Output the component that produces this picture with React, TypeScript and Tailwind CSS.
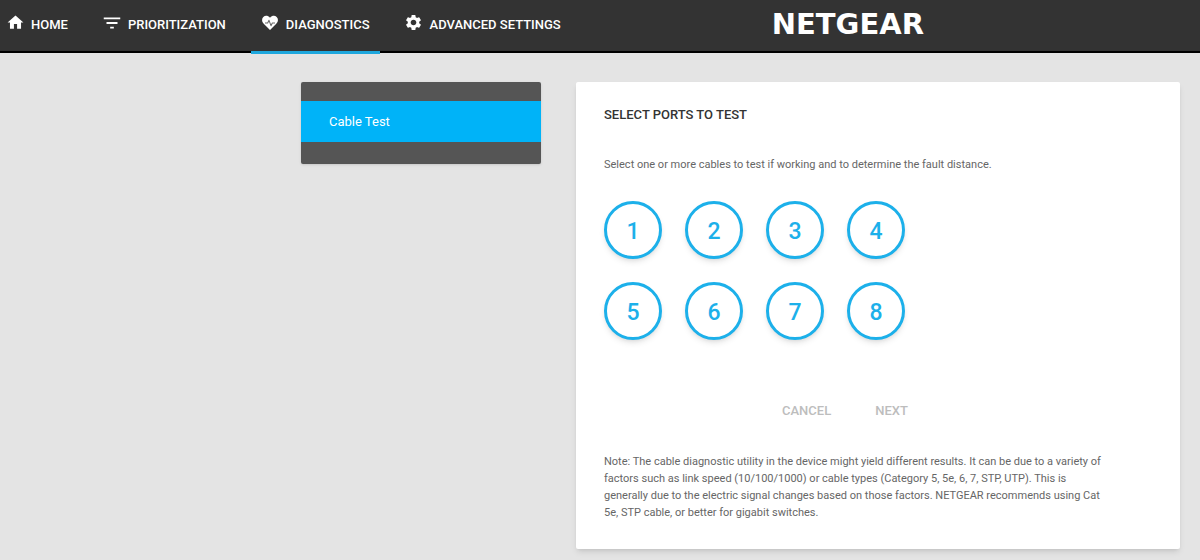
import { useState } from "react";
import type { ReactNode } from "react";
import clsx from "clsx";
import { MdFilterList, MdHome, MdSettings } from "react-icons/md";

type NavItem = {
  label: string;
  icon: ReactNode;
  active?: boolean;
};

function HeartPulseIcon({ className }: { className?: string }) {
  return (
    <svg viewBox="0 0 24 24" className={className} aria-hidden="true">
      <path
        fill="currentColor"
        d="M12 22.500 2.600 13.100C-.6 9.900-.6 5.500 2 3 4.800.4 9 .8 12 4.200 15 .8 19.200.4 22 3c2.600 2.500 2.600 6.900-.6 10.100z"
      />
      <path
        fill="none"
        stroke="#6a6a6a"
        strokeWidth="1.6"
        strokeLinejoin="round"
        d="M4.500 12h4l2-4 3 8 2-4h4"
      />
    </svg>
  );
}

const navItems: NavItem[] = [
  { label: "HOME", icon: <MdHome className="size-[19px] shrink-0" /> },
  { label: "PRIORITIZATION", icon: <MdFilterList className="size-[22px] shrink-0" /> },
  {
    label: "DIAGNOSTICS",
    icon: <HeartPulseIcon className="size-4 shrink-0" />,
    active: true,
  },
  { label: "ADVANCED SETTINGS", icon: <MdSettings className="size-[19px] shrink-0" /> },
];

const ports = [1, 2, 3, 4, 5, 6, 7, 8];

function Header() {
  return (
    <header className="flex h-[53px] items-stretch justify-between border-b-2 border-black bg-[#333333]">
      <nav className="-ml-1 flex gap-[15px]">
        {navItems.map((item) => (
          <a
            key={item.label}
            href="#"
            className={clsx(
              "-mb-[3px] flex items-center gap-[7px] border-b-3 px-2.5 pb-0.5 text-[13px] font-medium whitespace-nowrap text-white",
              item.active ? "border-[#1ea7dd]" : "border-transparent"
            )}
          >
            <span className="flex w-[18px] justify-center pb-1">{item.icon}</span>
            {item.label}
          </a>
        ))}
      </nav>
      <a
        href="#"
        className="mr-[23%] flex items-center pb-0.5 font-['DejaVu_Sans',sans-serif] text-[29px] font-bold text-white"
      >
        NETGEAR
      </a>
    </header>
  );
}

function Sidebar() {
  return (
    <aside className="w-60 shrink-0 rounded-xs bg-[#555555] pt-[19px] pb-[22px] shadow-sm">
      <a href="#" className="block bg-[#00b3f8] px-7 py-2.5 text-[13px] leading-[21px] text-white">
        Cable Test
      </a>
    </aside>
  );
}

function PortSelection() {
  const [selected, setSelected] = useState<number[]>([]);

  const togglePort = (port: number) => {
    setSelected((prev) =>
      prev.includes(port) ? prev.filter((p) => p !== port) : [...prev, port]
    );
  };

  return (
    <main className="min-w-0 flex-1 rounded-xs bg-white px-7 pt-6 pb-7 shadow-md">
      <h1 className="text-[13px] leading-[18px] font-medium text-[#333333]">
        SELECT PORTS TO TEST
      </h1>
      <p className="mt-8 text-[11px] leading-[17px] text-[#666666]">
        Select one or more cables to test if working and to determine the fault distance.
      </p>
      <div className="mt-7 grid w-fit grid-cols-4 gap-[23px]">
        {ports.map((port) => (
          <button
            key={port}
            type="button"
            aria-pressed={selected.includes(port)}
            onClick={() => togglePort(port)}
            className={clsx(
              "flex size-[58px] cursor-pointer items-center justify-center rounded-full border-3 border-[#1cb0ea] pt-1 text-[23px] font-medium shadow-md",
              selected.includes(port) ? "bg-[#1cb0ea] text-white" : "bg-white text-[#1cb0ea]"
            )}
          >
            {port}
          </button>
        ))}
      </div>
      <div className="mt-[61px] ml-[178px] flex gap-11 text-[13px] leading-5 font-medium text-[#bdbdbd]">
        <button type="button">CANCEL</button>
        <button type="button" disabled={selected.length === 0}>
          NEXT
        </button>
      </div>
      <p className="mt-8 max-w-[504px] text-[11px] leading-[17px] text-[#666666]">
        Note: The cable diagnostic utility in the device might yield different results. It can be
        due to a variety of factors such as link speed (10/100/1000) or cable types (Category 5, 5e,
        6, 7, STP, UTP). This is generally due to the electric signal changes based on those
        factors. NETGEAR recommends using Cat 5e, STP cable, or better for gigabit switches.
      </p>
    </main>
  );
}

export default function App() {
  return (
    <div className="min-h-screen bg-[#e4e4e4] font-[Roboto,sans-serif]">
      <Header />
      <div className="mr-5 ml-[25%] flex items-start gap-[35px] pt-[29px] pb-2.5 pl-px">
        <Sidebar />
        <PortSelection />
      </div>
    </div>
  );
}
